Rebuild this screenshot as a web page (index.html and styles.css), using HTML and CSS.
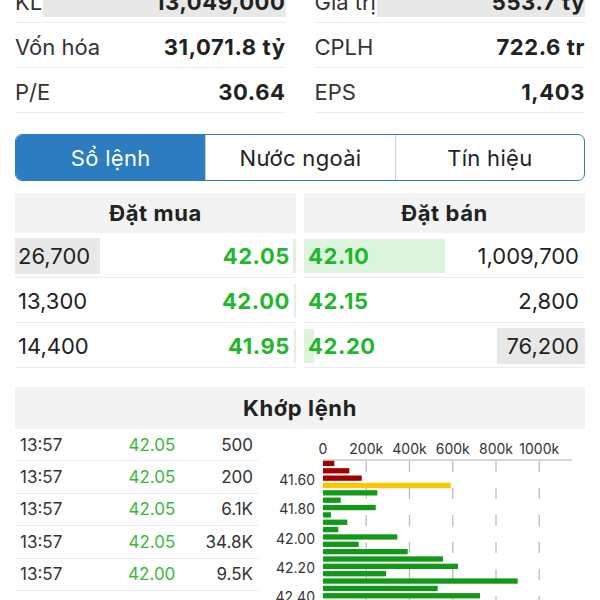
FILE: index.html
```html
<!DOCTYPE html>
<html lang="vi">
<head>
    <meta charset="UTF-8">
    <meta name="viewport" content="width=device-width, initial-scale=1.0">
    <title>Sổ lệnh</title>
    <link rel="stylesheet" href="styles.css">
</head>
<body>
<main class="page">

    <section class="stats">
        <div class="stat">
            <span class="vol-bar" style="width: 89.6%"></span>
            <span class="label">KL</span>
            <span class="value">13,049,000</span>
        </div>
        <div class="stat">
            <span class="vol-bar" style="width: 77%"></span>
            <span class="label">Giá trị</span>
            <span class="value">553.7 tỷ</span>
        </div>
        <div class="stat">
            <span class="label">Vốn hóa</span>
            <span class="value">31,071.8 tỷ</span>
        </div>
        <div class="stat">
            <span class="label">CPLH</span>
            <span class="value">722.6 tr</span>
        </div>
        <div class="stat">
            <span class="label">P/E</span>
            <span class="value">30.64</span>
        </div>
        <div class="stat">
            <span class="label">EPS</span>
            <span class="value">1,403</span>
        </div>
    </section>

    <nav class="tabs">
        <a href="#" class="tab active">Sổ lệnh</a>
        <a href="#" class="tab">Nước ngoài</a>
        <a href="#" class="tab">Tín hiệu</a>
    </nav>

    <section class="book">
        <div class="side bid">
            <div class="side-head">Đặt mua</div>
            <div class="order">
                <span class="depth" style="width: 1.2%"></span>
                <span class="qty hl">26,700</span>
                <span class="price">42.05</span>
            </div>
            <div class="order">
                <span class="depth" style="width: 0.8%"></span>
                <span class="qty">13,300</span>
                <span class="price">42.00</span>
            </div>
            <div class="order">
                <span class="depth" style="width: 0.8%"></span>
                <span class="qty">14,400</span>
                <span class="price">41.95</span>
            </div>
        </div>
        <div class="side ask">
            <div class="side-head">Đặt bán</div>
            <div class="order">
                <span class="depth" style="width: 50%"></span>
                <span class="price">42.10</span>
                <span class="qty">1,009,700</span>
            </div>
            <div class="order">
                <span class="price">42.15</span>
                <span class="qty">2,800</span>
            </div>
            <div class="order">
                <span class="depth" style="width: 3.6%"></span>
                <span class="price">42.20</span>
                <span class="qty hl">76,200</span>
            </div>
        </div>
    </section>

    <h3 class="section-head">Khớp lệnh</h3>

    <section class="match">
        <div class="trades">
            <div class="trade"><span>13:57</span><span class="t-price">42.05</span><span class="t-vol">500</span></div>
            <div class="trade"><span>13:57</span><span class="t-price">42.05</span><span class="t-vol">200</span></div>
            <div class="trade"><span>13:57</span><span class="t-price">42.05</span><span class="t-vol">6.1K</span></div>
            <div class="trade"><span>13:57</span><span class="t-price">42.05</span><span class="t-vol">34.8K</span></div>
            <div class="trade"><span>13:57</span><span class="t-price">42.00</span><span class="t-vol">9.5K</span></div>
            <div class="trade"><span>13:57</span><span class="t-price">42.00</span><span class="t-vol">1.2K</span></div>
        </div>

        <svg class="chart" width="315" height="180" viewBox="0 0 315 180">
            <!-- x axis -->
            <g class="axis-label" text-anchor="middle">
                <text x="53" y="19.5">0</text>
                <text x="96.25" y="19.5">200k</text>
                <text x="139.5" y="19.5">400k</text>
                <text x="182.75" y="19.5">600k</text>
                <text x="226" y="19.5">800k</text>
                <text x="269.25" y="19.5">1000k</text>
            </g>
            <line class="axis" x1="53" y1="31" x2="302" y2="31"/>
            <g class="grid">
                <line x1="96.25" y1="32" x2="96.25" y2="180"/>
                <line x1="139.5" y1="32" x2="139.5" y2="180"/>
                <line x1="182.75" y1="32" x2="182.75" y2="180"/>
                <line x1="226" y1="32" x2="226" y2="180"/>
                <line x1="269.25" y1="32" x2="269.25" y2="180"/>
            </g>

            <!-- volume by price -->
            <g class="bars">
                <rect class="sell" x="53" y="31.8" width="11.3" height="5.3"/>
                <rect class="sell" x="53" y="39.15" width="26.3" height="5.3"/>
                <rect class="sell" x="53" y="46.5" width="38.7" height="5.3"/>
                <rect class="ref" x="53" y="53.85" width="127.7" height="5.3"/>
                <rect class="buy" x="53" y="61.2" width="54.3" height="5.3"/>
                <rect class="buy" x="53" y="68.55" width="17.7" height="5.3"/>
                <rect class="buy" x="53" y="75.9" width="52.7" height="5.3"/>
                <rect class="buy" x="53" y="83.25" width="8" height="5.3"/>
                <rect class="buy" x="53" y="90.6" width="24.3" height="5.3"/>
                <rect class="buy" x="53" y="97.95" width="15.3" height="5.3"/>
                <rect class="buy" x="53" y="105.3" width="74.3" height="5.3"/>
                <rect class="buy" x="53" y="112.65" width="35.7" height="5.3"/>
                <rect class="buy" x="53" y="120" width="84.7" height="5.3"/>
                <rect class="buy" x="53" y="127.35" width="120" height="5.3"/>
                <rect class="buy" x="53" y="134.7" width="135" height="5.3"/>
                <rect class="buy" x="53" y="142.05" width="63" height="5.3"/>
                <rect class="buy" x="53" y="149.4" width="194.7" height="5.3"/>
                <rect class="buy" x="53" y="156.75" width="114.7" height="5.3"/>
                <rect class="buy" x="53" y="164.1" width="157" height="5.3"/>
                <rect class="buy" x="53" y="171.45" width="90" height="5.3"/>
            </g>

            <g class="axis-label" text-anchor="end">
                <text x="45" y="50.5">41.60</text>
                <text x="45" y="79.5">41.80</text>
                <text x="45" y="109">42.00</text>
                <text x="45" y="138">42.20</text>
                <text x="45" y="167.5">42.40</text>
            </g>
        </svg>
    </section>

</main>
</body>
</html>
```

FILE: styles.css
```css
body {
    font-family: 'Inter', 'Liberation Sans', sans-serif;
    margin: 0;
    padding: 0;
    background: #fff;
    color: #222;
}

.page {
    padding: 0 15px;
}

/* stats */
.stats {
    display: grid;
    grid-template-columns: 1fr 1fr;
    column-gap: 29px;
    margin-top: -22px;
}

.stat {
    position: relative;
    display: flex;
    justify-content: space-between;
    align-items: center;
    height: 45px;
    box-sizing: border-box;
    padding-top: 3px;
    border-bottom: 1px solid #ececec;
    font-size: 22px;
}

.stat .label,
.stat .value {
    position: relative;
}

.stat .label {
    color: #333;
}

.stat .value {
    font-weight: 700;
    letter-spacing: 0.6px;
    color: #222;
}

.vol-bar {
    position: absolute;
    right: 0;
    top: 4px;
    bottom: 5px;
    background: #e8e8e8;
}

/* tabs */
.tabs {
    display: grid;
    grid-template-columns: repeat(3, 1fr);
    margin-top: 21px;
    height: 47px;
    box-sizing: border-box;
    border: 1px solid #2b7cc0;
    border-radius: 7px;
    overflow: hidden;
}

.tab {
    display: flex;
    align-items: center;
    justify-content: center;
    font-size: 22px;
    letter-spacing: 0.3px;
    color: #222;
    text-decoration: none;
}

.tab + .tab {
    border-left: 1px solid #d0d0d0;
}

.tab.active {
    background: #2b7cc0;
    color: #fff;
}

/* order book */
.book {
    display: grid;
    grid-template-columns: 1fr 1fr;
    column-gap: 8px;
    margin-top: 12px;
}

.side-head {
    height: 40px;
    background: #f3f3f3;
    display: flex;
    align-items: center;
    justify-content: center;
    font-size: 22px;
    font-weight: 700;
    letter-spacing: 0.6px;
}

.order {
    position: relative;
    display: flex;
    justify-content: space-between;
    align-items: center;
    height: 45px;
    box-sizing: border-box;
    padding-top: 2px;
    border-bottom: 1px solid #ececec;
    font-size: 22px;
}

.order .qty,
.order .price {
    position: relative;
}

.depth {
    position: absolute;
    top: 6px;
    bottom: 4px;
    background: #dcf4dc;
}

.bid .depth {
    right: 0;
}

.ask .depth {
    left: 0;
}

.price {
    font-weight: 700;
    letter-spacing: 0.6px;
    color: #1fb82c;
}

.qty {
    color: #222;
    line-height: 36px;
}

.qty.hl {
    background: #e8e8e8;
    width: 82px;
}

.bid .qty {
    padding-left: 3px;
}

.bid .price {
    padding-right: 6px;
}

.ask .price {
    padding-left: 4px;
}

.ask .qty {
    padding-right: 6px;
    text-align: right;
}

/* matched orders */
.section-head {
    margin: 19px 0 0;
    height: 42px;
    background: #f3f3f3;
    display: flex;
    align-items: center;
    justify-content: center;
    font-size: 22px;
    font-weight: 700;
    letter-spacing: 0.6px;
}

.match {
    display: flex;
    gap: 12px;
}

.trades {
    width: 243px;
    flex-shrink: 0;
}

.trade {
    display: grid;
    grid-template-columns: repeat(3, 1fr);
    align-items: center;
    height: 32.4px;
    box-sizing: border-box;
    padding: 0 5px;
    border-bottom: 1px solid #ececec;
    font-size: 17px;
    color: #333;
}

.t-price {
    text-align: right;
    color: #3cb83c;
}

.t-vol {
    text-align: right;
}

.chart {
    display: block;
    flex-shrink: 0;
}

.axis-label {
    font-size: 14px;
    fill: #333;
    dominant-baseline: central;
}

.axis {
    stroke: #c8c8c8;
    stroke-width: 1.3;
}

.grid line {
    stroke: #bdbdbd;
    stroke-width: 1.3;
    stroke-dasharray: 11 16;
}

.bars .sell {
    fill: #a00000;
}

.bars .ref {
    fill: #fcc600;
}

.bars .buy {
    fill: #12991a;
}
```
